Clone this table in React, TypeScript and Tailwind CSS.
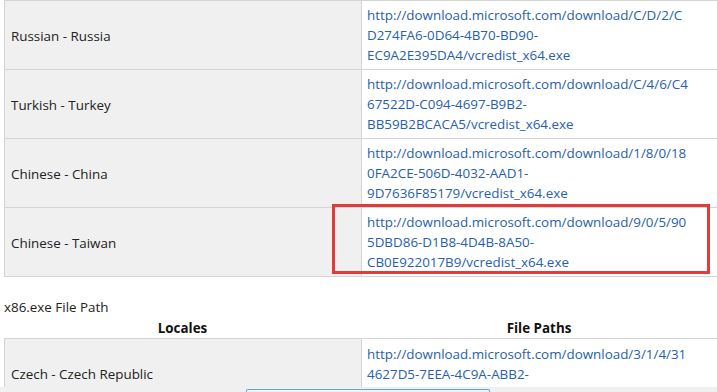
const rows = [
  {
    locale: "Russian - Russia",
    lines: ["http://download.microsoft.com/download/C/D/2/C", "D274FA6-0D64-4B70-BD90-", "EC9A2E395DA4/vcredist_x64.exe"],
  },
  {
    locale: "Turkish - Turkey",
    lines: ["http://download.microsoft.com/download/C/4/6/C4", "67522D-C094-4697-B9B2-", "BB59B2BCACA5/vcredist_x64.exe"],
  },
  {
    locale: "Chinese - China",
    lines: ["http://download.microsoft.com/download/1/8/0/18", "0FA2CE-506D-4032-AAD1-", "9D7636F85179/vcredist_x64.exe"],
  },
  {
    locale: "Chinese - Taiwan",
    lines: ["http://download.microsoft.com/download/9/0/5/90", "5DBD86-D1B8-4D4B-8A50-", "CB0E922017B9/vcredist_x64.exe"],
    marked: true,
  },
];

const Row = ({ locale, lines, marked }: { locale: string; lines: string[]; marked?: boolean }) => (
  <div className="relative grid h-[69px] grid-cols-[357px_1fr] border-b border-[#d4d4d4]">
    <div className="flex items-center border-r border-[#d4d4d4] bg-[#f0f0f0] pl-[6px] pt-[2px]">{locale}</div>
    <div className="flex flex-col justify-center pl-[5px] text-[#2761ab]">
      {lines.map((l) => (
        <span key={l} className="leading-[20px]">
          {l}
        </span>
      ))}
    </div>
    {marked ? (
      <div className="pointer-events-none absolute left-[327px] top-[-4px] h-[70px] w-[378px] border-[3px] border-[#e23b3b]" />
    ) : null}
  </div>
);

export default function App() {
  return (
    <div className="relative h-[392px] w-[717px] overflow-hidden bg-white font-['Open_Sans',sans-serif] text-[13.4px] text-[#222]">
      <div className="ml-[4px] border-l border-t border-[#d4d4d4]">
        {rows.map((r) => (
          <Row key={r.locale} {...r} />
        ))}
      </div>

      <p className="ml-[4px] mt-[19px] leading-[22px]">x86.exe File Path</p>
      <div className="ml-[4px] grid grid-cols-[357px_1fr] font-bold text-[#111]">
        <span className="text-center leading-[20px]">Locales</span>
        <span className="text-center leading-[20px]">File Paths</span>
      </div>
      <div className="ml-[4px] border-l border-t border-[#d4d4d4]">
        <div className="grid h-[69px] grid-cols-[357px_1fr]">
          <div className="flex items-center border-r border-[#d4d4d4] bg-[#f0f0f0] pl-[6px] pt-[2px]">Czech - Czech Republic</div>
          <div className="flex flex-col justify-center pl-[5px] text-[#2761ab]">
            <span className="leading-[20px]">http://download.microsoft.com/download/3/1/4/31</span>
            <span className="leading-[20px]">4627D5-7EEA-4C9A-ABB2-</span>
            <span className="leading-[20px]">FE6F1D1ED2F4/vcredist_x86.exe</span>
          </div>
        </div>
      </div>

      {/* bottom bar overlapping the page */}
      <div className="absolute inset-x-0 top-[387px] h-[5px] bg-[#f0f0f0]">
        <div className="ml-[246px] mt-[2px] h-[3px] w-[244px] rounded-t-[2px] border-t border-x border-[#5aa9dc] bg-[#e8f3fb]" />
      </div>
    </div>
  );
}
